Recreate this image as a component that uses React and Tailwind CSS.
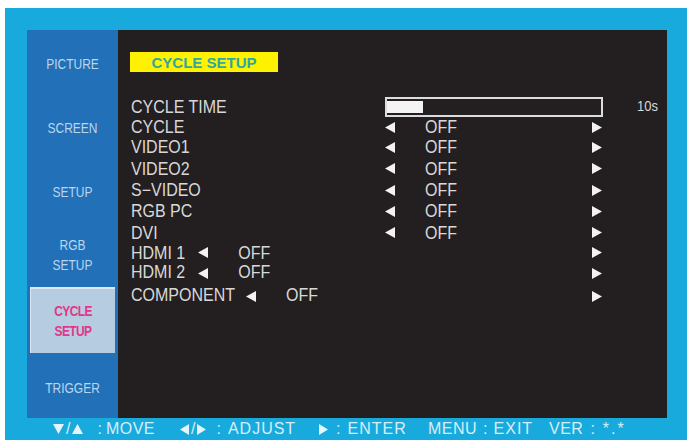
import React from "react";

const Tri = ({ dir = "left", w = 10, h = 11, className = "", color = "#f2f2f2" }) => {
  const pts = {
    left: `${w},0 ${w},${h} 0,${h / 2}`,
    right: `0,0 0,${h} ${w},${h / 2}`,
    up: `0,${h} ${w},${h} ${w / 2},0`,
    down: `0,0 ${w},0 ${w / 2},${h}`,
  }[dir];
  return (
    <svg width={w} height={h} viewBox={`0 0 ${w} ${h}`} className={`flex-shrink-0 ${className}`}>
      <polygon points={pts} fill={color} />
    </svg>
  );
};

const MENU = [
  { key: "picture", lines: ["PICTURE"] },
  { key: "screen", lines: ["SCREEN"] },
  { key: "setup", lines: ["SETUP"] },
  { key: "rgb", lines: ["RGB", "SETUP"] },
  { key: "cycle", lines: ["CYCLE", "SETUP"], active: true },
  { key: "trigger", lines: ["TRIGGER"] },
];

const ROWS = [
  { label: "CYCLE", h: "h-[20px]" },
  { label: "VIDEO1", h: "h-[20px]" },
  { label: "VIDEO2", h: "h-[23px]" },
  { label: "S\u2212VIDEO", h: "h-[20px]" },
  { label: "RGB PC", h: "h-[22px]" },
  { label: "DVI", h: "h-[21px]" },
  { label: "HDMI 1", h: "h-[19px]", inline: "ml-[13px]" },
  { label: "HDMI 2", h: "h-[22px]", inline: "ml-[13px]" },
  { label: "COMPONENT", h: "h-[24px]", inline: "ml-[11px]" },
];

const Sidebar = () => (
  <div className="w-[91px] h-full flex flex-col bg-[#2270b8]">
    {MENU.map((m) =>
      m.active ? (
        <div key={m.key} className="flex-1 flex items-center justify-center mx-[3px] my-[1px] bg-[#b6cce0] border-t-2 border-l border-[#dbe8f3]">
          <div className="text-[#e3368b] font-bold text-[12px] leading-[16px] tracking-tighter text-center scale-y-125">
            {m.lines.map((l) => <div key={l}>{l}</div>)}
          </div>
        </div>
      ) : (
        <div key={m.key} className="flex-1 flex items-center justify-center">
          <div className="text-[#b9d6ef] text-[12px] leading-[17px] text-center scale-y-120 translate-y-[2px]">
            {m.lines.map((l) => <div key={l}>{l}</div>)}
          </div>
        </div>
      )
    )}
  </div>
);

const T = ({ children, className = "" }) => (
  <span className={`inline-block scale-y-110 ${className}`}>{children}</span>
);

const Row = ({ r }) => (
  <div className={`flex items-center ${r.h}`}>
    <div className="w-[254px] flex items-center">
      <T>{r.label}</T>
      {r.inline && (
        <>
          <Tri dir="left" className={r.inline} />
          <T className="ml-[30px]">OFF</T>
        </>
      )}
    </div>
    <div className="w-[218px] flex items-center">
      {!r.inline && (
        <>
          <Tri dir="left" />
          <T className="ml-[30px]">OFF</T>
        </>
      )}
      <Tri dir="right" className="ml-auto mr-[1px]" />
    </div>
  </div>
);

const Panel = () => (
  <div className="w-[549px] h-full bg-[#231f20] pl-[12px] pt-[22px] text-[#d8d8d8] text-[16px]">
    <div className="w-[148px] h-[20px] bg-[#fff200] flex items-center justify-center">
      <span className="text-[#2fa7a2] font-bold text-[15px] leading-none">CYCLE SETUP</span>
    </div>
    <div className="mt-[25px] pl-[1px]">
      <div className="flex items-center h-[20px]">
        <div className="w-[254px]"><T>CYCLE TIME</T></div>
        <div className="w-[218px] h-[20px] border-2 border-[#dcdcdc] py-[2px]">
          <div className="w-[36px] h-full bg-[#f4f4f4]" />
        </div>
        <span className="ml-[34px] text-[13px] scale-y-110 inline-block">10s</span>
      </div>
      {ROWS.map((r) => <Row key={r.label} r={r} />)}
    </div>
  </div>
);

const Legend = () => (
  <div className="h-[22px] flex items-center ml-[26px] text-[16px] text-[#d7eef8]">
    <div className="w-[127px] flex items-center">
      <Tri dir="down" w={11} h={10} color="#e6f5fb" />
      <span className="mx-[2px]">/</span>
      <Tri dir="up" w={11} h={10} color="#e6f5fb" />
      <span className="ml-[14px]">:</span>
      <span className="ml-[4px] tracking-[0.5px]">MOVE</span>
    </div>
    <div className="w-[139px] flex items-center">
      <Tri dir="left" w={9} h={11} color="#e6f5fb" />
      <span className="mx-[2px]">/</span>
      <Tri dir="right" w={9} h={11} color="#e6f5fb" />
      <span className="ml-[10px]">:</span>
      <span className="ml-[7px] tracking-[1px]">ADJUST</span>
    </div>
    <div className="w-[109px] flex items-center">
      <Tri dir="right" w={9} h={11} color="#e6f5fb" />
      <span className="ml-[8px]">:</span>
      <span className="ml-[7px] tracking-[1px]">ENTER</span>
    </div>
    <div className="w-[121px] flex items-center">
      <span className="tracking-[0.5px]">MENU</span>
      <span className="ml-[6px]">:</span>
      <span className="ml-[6px] tracking-[1px]">EXIT</span>
    </div>
    <div className="flex items-center">
      <span className="tracking-[0.5px]">VER</span>
      <span className="ml-[7px]">:</span>
      <span className="ml-[8px] tracking-[2px]">*.*</span>
    </div>
  </div>
);

export default function App() {
  return (
    <div className="w-[687px] h-[440px] bg-white pl-[5px] pt-[8px] overflow-hidden font-['Liberation_Sans',Arial,sans-serif]">
      <div className="h-[432px] bg-[#19aadd] flex flex-col pl-[22px] pt-[22px] pr-[20px]">
        <div className="flex h-[388px]">
          <Sidebar />
          <Panel />
        </div>
        <Legend />
      </div>
    </div>
  );
}
